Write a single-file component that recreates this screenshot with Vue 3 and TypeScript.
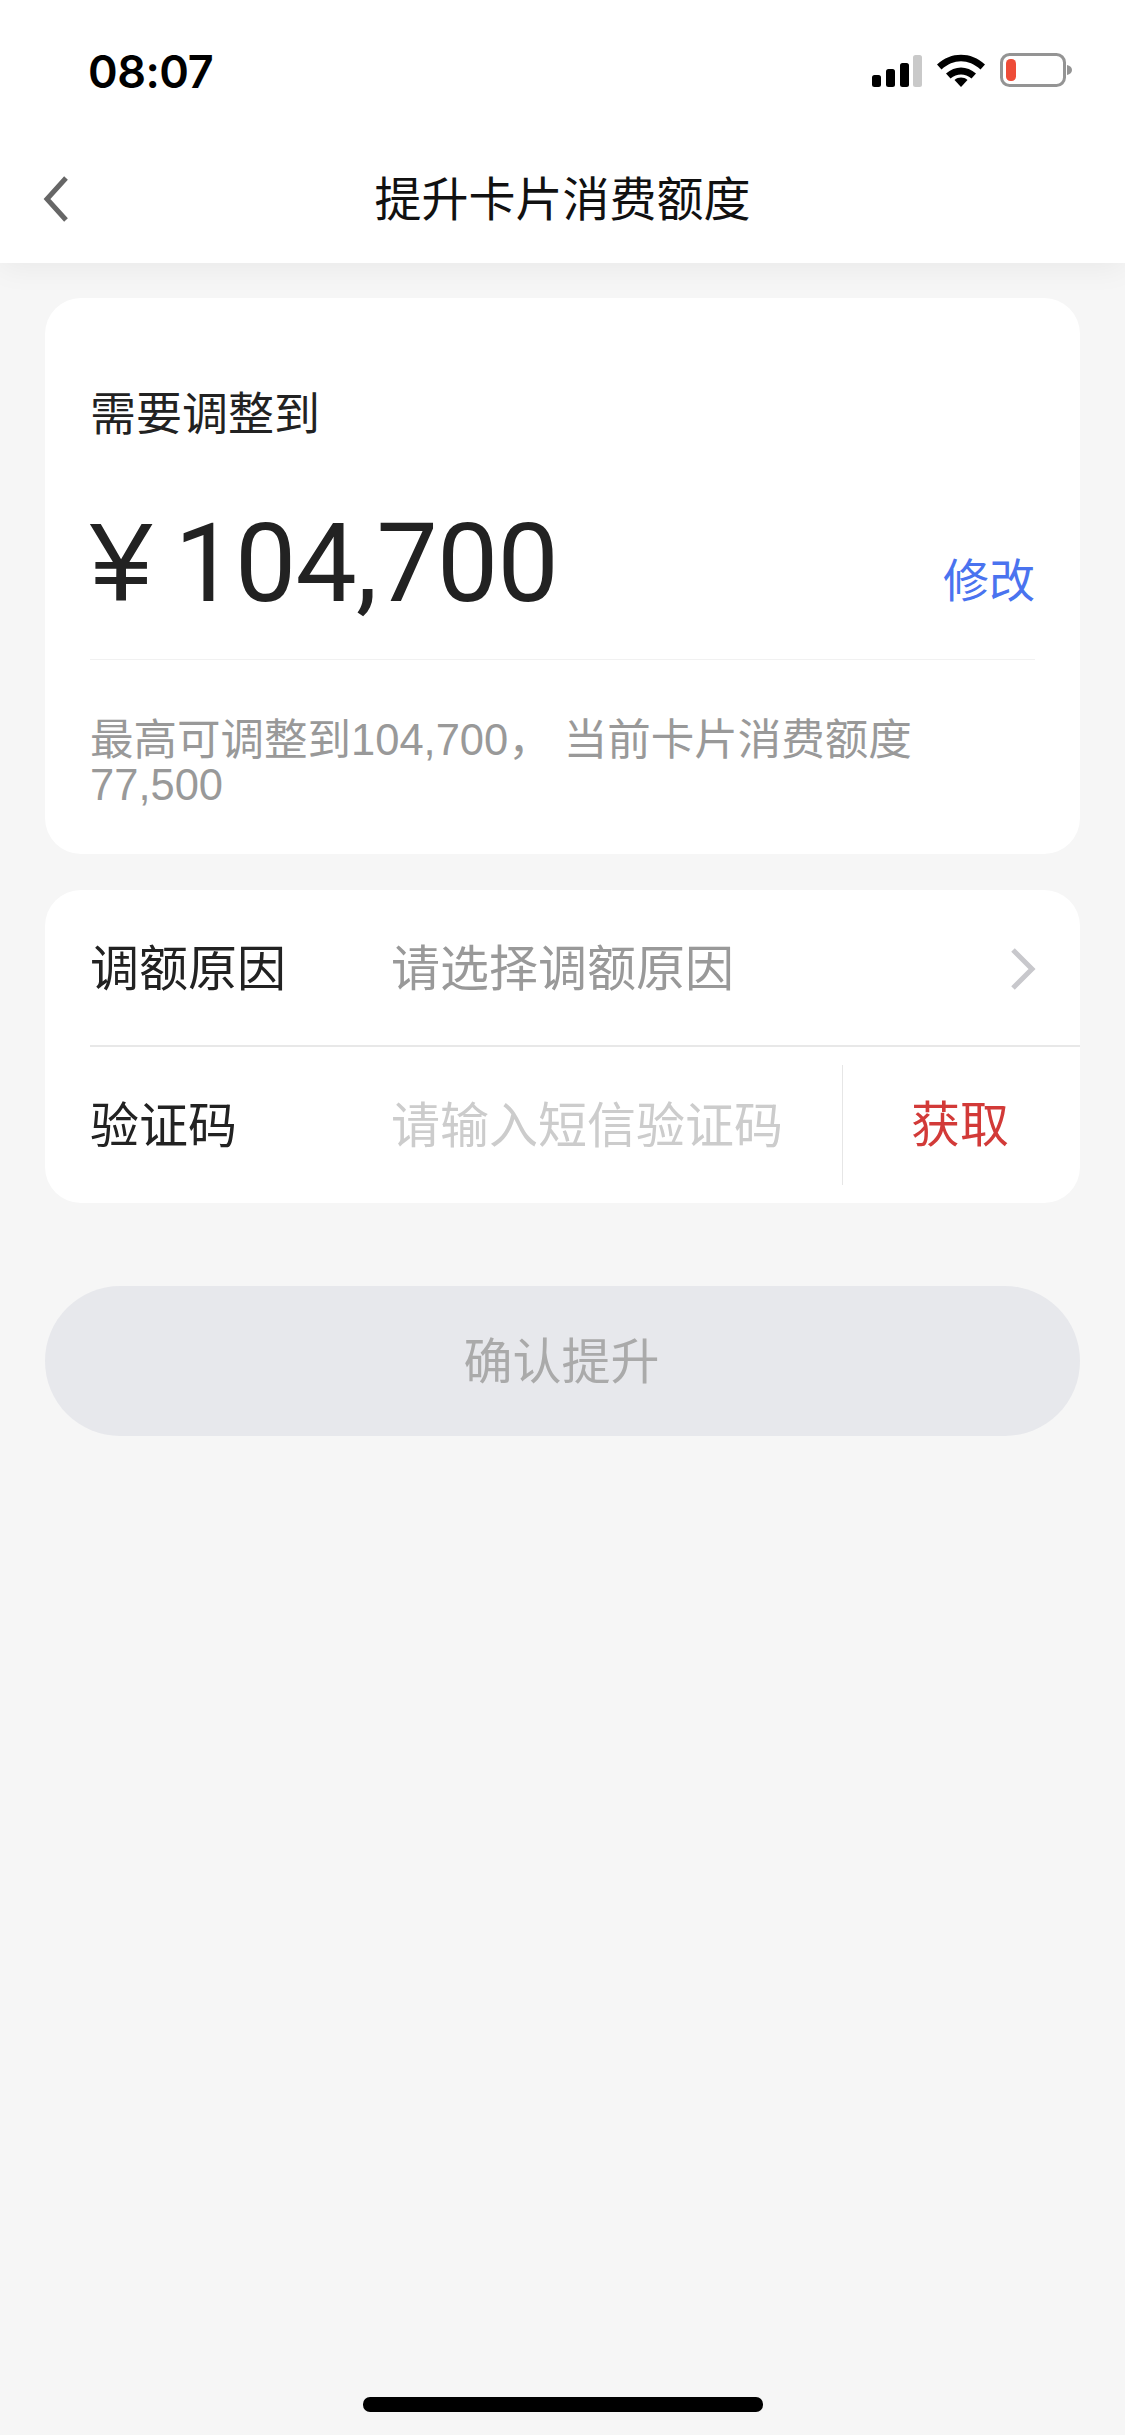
<script setup lang="ts">
const reasonLabel = '调额原因'
const codeLabel = '验证码'
</script>

<template>
  <div class="page">
    <header class="top">
      <div class="status">
        <span class="time">08:07</span>
        <div class="status-icons">
          <svg class="signal" width="50" height="32" viewBox="0 0 50 32">
            <rect x="0" y="20" width="9" height="12" rx="2.5" fill="#000" />
            <rect x="14" y="14" width="9" height="18" rx="2.5" fill="#000" />
            <rect x="28" y="8" width="9" height="24" rx="2.5" fill="#000" />
            <rect x="41" y="0" width="9" height="32" rx="2.5" fill="#c9c9c9" />
          </svg>
          <svg class="wifi" width="48" height="34" viewBox="0 0 48 34">
            <path d="M0 11.5C14 -1.5 34 -1.5 48 11.5L43.5 16.5C31.5 5.5 16.5 5.5 4.5 16.5Z" fill="#000" />
            <path d="M9 20.5C18 12.5 30 12.5 39 20.5L34.5 25.5C28 20 20 20 13.5 25.5Z" fill="#000" />
            <path d="M17.5 27C21.5 23.8 26.5 23.8 30.5 27L24 34Z" fill="#000" />
          </svg>
          <svg class="battery" width="72" height="34" viewBox="0 0 72 34">
            <rect x="1.5" y="1.5" width="63" height="31" rx="8" fill="#fff" stroke="#949494" stroke-width="3" />
            <rect x="6" y="6" width="10" height="22" rx="4.5" fill="#ee4c38" />
            <path d="M67 12C70 12.800 72 14.500 72 17C72 19.500 70 21.200 67 22Z" fill="#949494" />
          </svg>
        </div>
      </div>
      <div class="nav">
        <svg class="back" width="26" height="46" viewBox="0 0 26 46">
          <path d="M23 2L4 23L23 44" fill="none" stroke="#666" stroke-width="5" />
        </svg>
        <h1 class="title">提升卡片消费额度</h1>
      </div>
    </header>

    <main class="content">
      <section class="card amount-card">
        <div class="amount-label">需要调整到</div>
        <div class="amount-row">
          <div class="amount"><span class="yen">¥</span>104,700</div>
          <span class="edit">修改</span>
        </div>
        <p class="hint">最高可调整到104,700， 当前卡片消费额度77,500</p>
      </section>

      <section class="card form-card">
        <div class="row row-first">
          <span class="row-label">{{ reasonLabel }}</span>
          <span class="row-value">请选择调额原因</span>
          <svg class="chevron" width="26" height="42" viewBox="0 0 26 42">
            <path d="M3 2L22 21L3 40" fill="none" stroke="#c8c8cc" stroke-width="5" />
          </svg>
        </div>
        <div class="row row-code">
          <span class="row-label">{{ codeLabel }}</span>
          <span class="row-value placeholder">请输入短信验证码</span>
          <span class="get-code">获取</span>
        </div>
      </section>

      <button class="submit" type="button">确认提升</button>
    </main>

    <div class="home-bar"></div>
  </div>
</template>

<style>
html,
body {
  margin: 0;
  background: #f6f6f6;
}
</style>

<style scoped>
.page {
  position: relative;
  width: 1125px;
  height: 2435px;
  overflow: hidden;
  background: #f6f6f6;
  font-family: "Liberation Sans", "Noto Sans CJK SC", sans-serif;
  color: #222;
}

.top {
  height: 263px;
  background: #fff;
  box-shadow: 0 4px 30px rgba(0, 0, 0, 0.06);
  position: relative;
}

.status {
  height: 143px;
  padding: 0 53px 0 88px;
  box-sizing: border-box;
  display: flex;
  justify-content: space-between;
  align-items: flex-start;
}

.time {
  margin-top: 45px;
  font-family: Inter, "Liberation Sans", sans-serif;
  font-size: 45px;
  line-height: 54px;
  font-weight: 600;
  letter-spacing: -0.5px;
  color: #000;
}

.status-icons {
  margin-top: 53px;
  display: flex;
  align-items: flex-start;
  gap: 15px;
}

.signal {
  margin-top: 2px;
}

.nav {
  position: relative;
  height: 110px;
  display: flex;
  align-items: center;
  justify-content: center;
}

.back {
  position: absolute;
  left: 43px;
  top: 33px;
}

.title {
  margin: 3px 0 0;
  font-size: 47px;
  line-height: 110px;
  font-weight: 400;
  color: #111;
}

.content {
  padding: 35px 45px 0;
}

.card {
  background: #fff;
  border-radius: 36px;
}

.amount-card {
  height: 556px;
  box-sizing: border-box;
  padding: 86px 45px 0;
  margin-bottom: 36px;
}

.amount-label {
  font-size: 46px;
  line-height: 60px;
  color: #222;
}

.amount-row {
  margin-top: 43px;
  height: 172px;
  display: flex;
  justify-content: space-between;
  align-items: flex-start;
  border-bottom: 1px solid #f1f1f1;
}

.amount {
  margin-top: 11px;
  font-family: Roboto, "Liberation Sans", sans-serif;
  font-size: 109px;
  line-height: 130px;
  font-weight: 400;
  letter-spacing: -0.8px;
  color: #222;
}

.yen {
  margin-right: 23px;
  font-family: "Liberation Sans", sans-serif;
  font-size: 112px;
}

.edit {
  margin-top: 64px;
  font-size: 46px;
  line-height: 60px;
  color: #4a73ef;
}

.hint {
  margin: 58px 0 0;
  font-size: 43.5px;
  line-height: 45px;
  color: #999;
  width: 850px;
}

.form-card {
  height: 313px;
  overflow: hidden;
}

.row {
  display: flex;
  align-items: center;
  margin-left: 45px;
  font-size: 49px;
}

.row-first {
  height: 155px;
  padding-right: 44px;
  border-bottom: 2px solid #e8e8e8;
}

.row-first .row-label,
.row-first .row-value {
  margin-bottom: 6px;
}

.row-code {
  height: 156px;
}

.row-code .row-label,
.row-code .row-value {
  margin-bottom: 8px;
}

.chevron {
  margin-top: 2px;
}

.row-label {
  width: 301px;
  flex: none;
  color: #222;
}

.row-value {
  flex: 1;
  color: #999;
}

.placeholder {
  color: #ccc;
}

.get-code {
  width: 238px;
  height: 120px;
  flex: none;
  box-sizing: border-box;
  border-left: 1px solid #e6e6e6;
  padding-left: 68px;
  line-height: 121px;
  color: #d23a38;
}

.submit {
  display: block;
  width: 100%;
  height: 150px;
  margin-top: 83px;
  padding: 0 2px 8px 0;
  border: none;
  border-radius: 75px;
  background: #e7e8ec;
  color: #aaa;
  font-family: inherit;
  font-size: 49px;
}

.home-bar {
  position: absolute;
  left: 363px;
  bottom: 23px;
  width: 400px;
  height: 15px;
  border-radius: 7px;
  background: #000;
}
</style>
